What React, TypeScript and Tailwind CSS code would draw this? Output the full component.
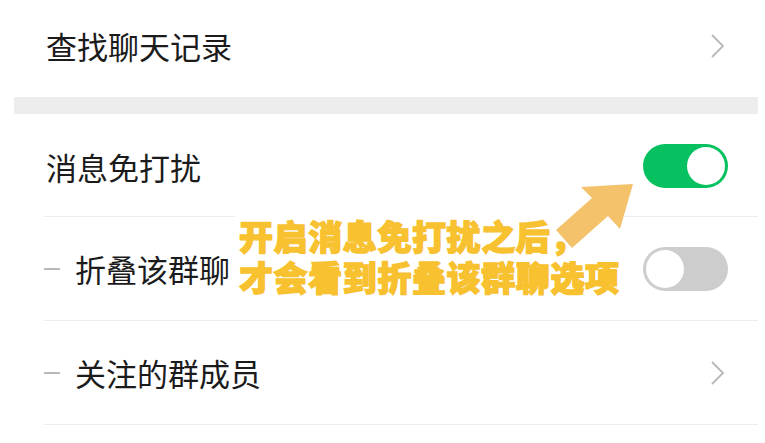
import type { ReactNode } from "react";

const FONT = { fontFamily: '"Noto Sans CJK SC", "Noto Sans", sans-serif' };

function Chevron() {
  return (
    <svg width="16" height="26" viewBox="0 0 16 26" className="shrink-0">
      <path d="M2 2 L13 13 L2 24" fill="none" stroke="#b8b8b8" strokeWidth="1.8" />
    </svg>
  );
}

function Toggle({ on }: { on: boolean }) {
  return (
    <div
      className={`w-[85px] h-[44px] rounded-full p-[3px] flex shrink-0 ${
        on ? "bg-[#07c160] justify-end" : "bg-[#cdcdcd] justify-start"
      }`}
    >
      <div className="w-[38px] h-[38px] rounded-full bg-white" />
    </div>
  );
}

function Row({
  label,
  sub,
  right,
  className,
}: {
  label: string;
  sub?: boolean;
  right: ReactNode;
  className: string;
}) {
  return (
    <div className={`flex items-center justify-between pl-[30px] ${className}`}>
      <div className="flex items-center">
        {sub && <div className="w-[16px] h-[2px] bg-[#b8b8b8] mr-[15px]" />}
        <span className={`text-[31px] leading-none text-[#1b1b1b] ${sub ? "" : "ml-[2px]"}`}>{label}</span>
      </div>
      {right}
    </div>
  );
}

function Divider() {
  return <div className="ml-[30px] h-px bg-[#ececec]" />;
}

export default function App() {
  return (
    <div className="relative w-[765px] h-[443px] bg-white overflow-hidden" style={FONT}>
      <div className="ml-[14px] w-[744px]">
        <Row label="查找聊天记录" right={<div className="mr-[32px]"><Chevron /></div>} className="h-[97px] pb-[6px]" />
        <div className="h-[17px] bg-[#ededed]" />
        <Row label="消息免打扰" right={<div className="mr-[30px]"><Toggle on /></div>} className="h-[102px] pt-[2px]" />
        <Divider />
        <Row label="折叠该群聊" sub right={<div className="mr-[30px]"><Toggle on={false} /></div>} className="h-[103px]" />
        <Divider />
        <Row label="关注的群成员" sub right={<div className="mr-[32px]"><Chevron /></div>} className="h-[103px]" />
        <Divider />
      </div>

      {/* 标注 */}
      <div className="absolute left-[235px] top-[215px] bg-white px-[4px] flex flex-col">
        <span
          className="text-[34px] leading-[41px] font-black text-[#f8c130] tracking-[0.6px]"
          style={{ WebkitTextStroke: "1.4px #f8c130" }}
        >
          开启消息免打扰之后，
        </span>
        <span
          className="text-[34px] leading-[41px] font-black text-[#f8c130] tracking-[0.6px]"
          style={{ WebkitTextStroke: "1.4px #f8c130" }}
        >
          才会看到折叠该群聊选项
        </span>
      </div>
      <svg className="absolute left-0 top-0" width="765" height="443" viewBox="0 0 765 443">
        <polygon
          points="633,184 620,229 608,216 572,248 556,230 592,198 581,187"
          fill="#f4c26a"
        />
      </svg>
    </div>
  );
}
